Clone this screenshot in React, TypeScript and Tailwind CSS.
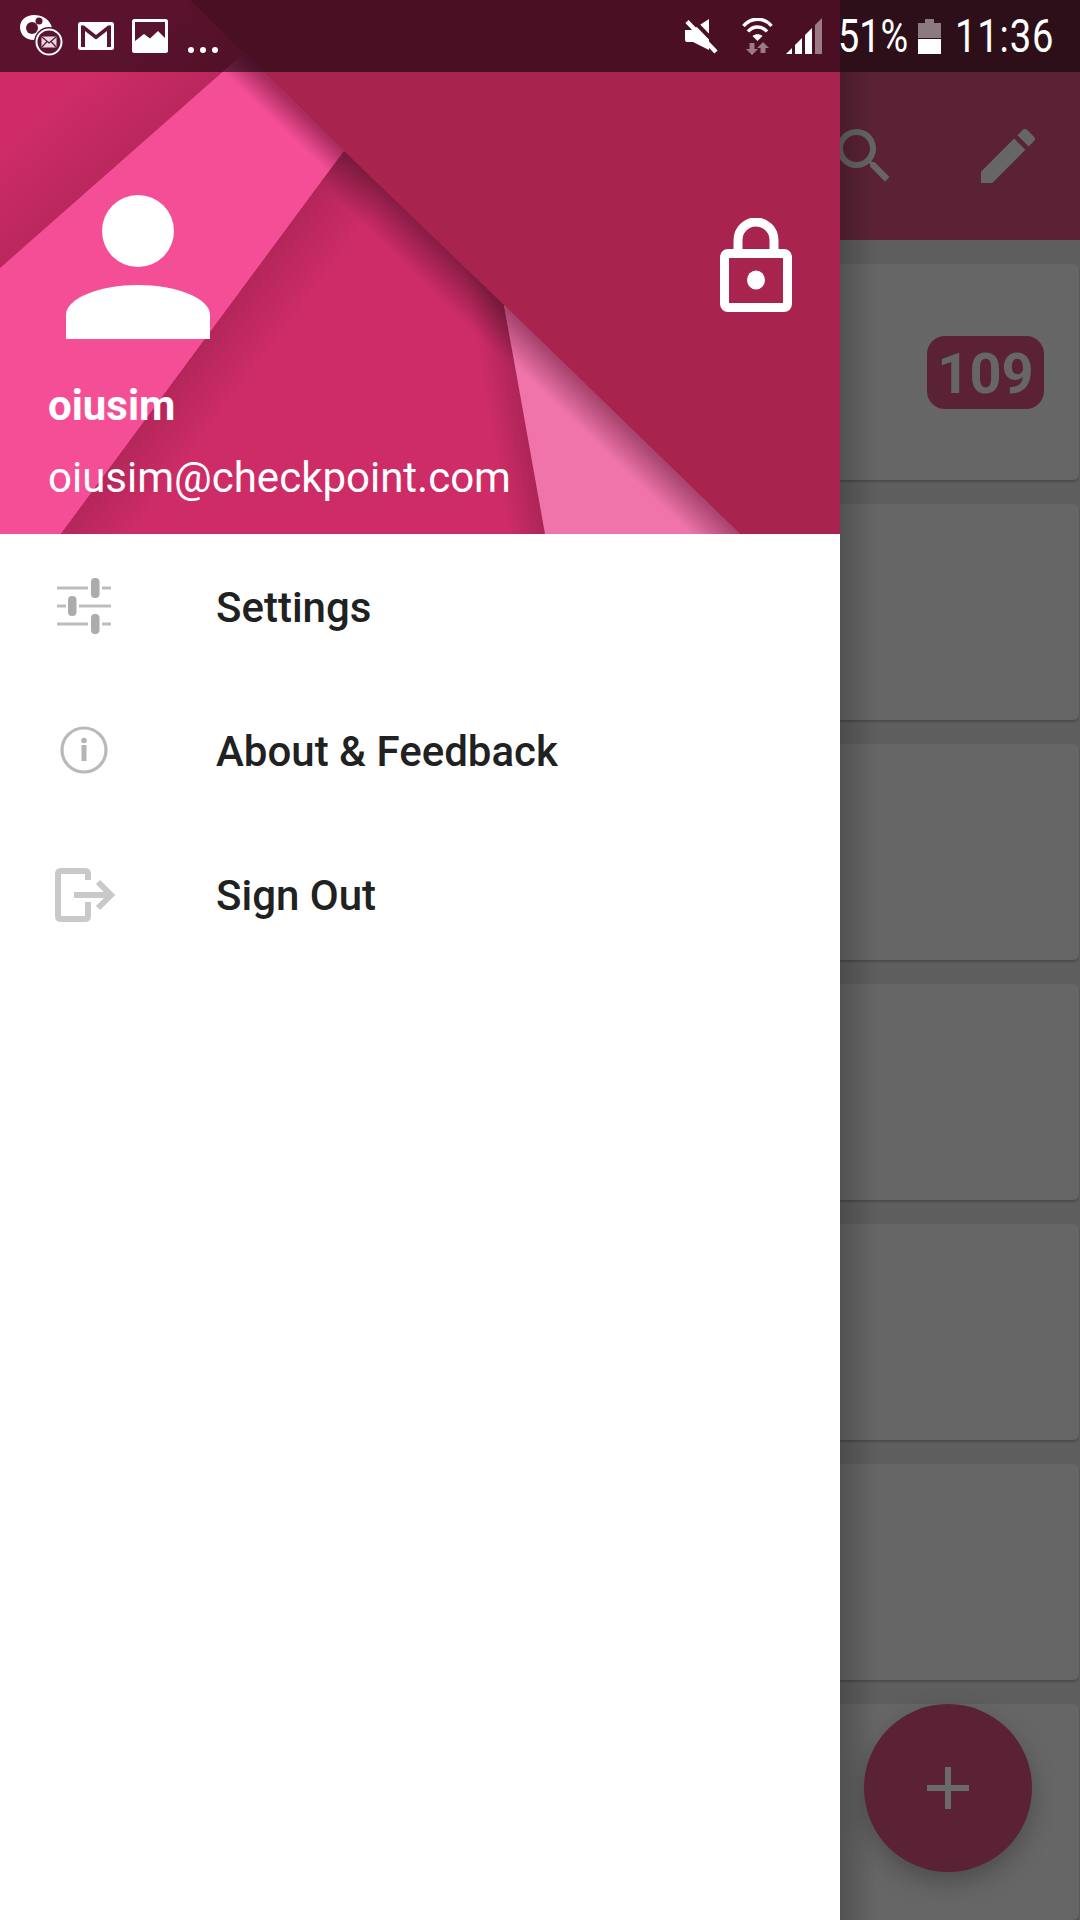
const FONT = "font-['Roboto',sans-serif]";

function HeaderArt() {
  return (
    <svg className="absolute inset-0" width="840" height="534" viewBox="0 0 840 534">
      <defs>
        <linearGradient id="topLeft" gradientUnits="userSpaceOnUse" x1="122" y1="160" x2="62" y2="92">
          <stop offset="0" stopColor="#000" stopOpacity="0.1" />
          <stop offset="1" stopColor="#000" stopOpacity="0" />
        </linearGradient>
        <linearGradient id="bandTop" gradientUnits="userSpaceOnUse" x1="344" y1="151" x2="326" y2="170">
          <stop offset="0" stopColor="#6a0f30" stopOpacity="0.55" />
          <stop offset="1" stopColor="#6a0f30" stopOpacity="0" />
        </linearGradient>
        <linearGradient id="midTop" gradientUnits="userSpaceOnUse" x1="424" y1="228" x2="396" y2="257">
          <stop offset="0" stopColor="#000" stopOpacity="0.35" />
          <stop offset="1" stopColor="#000" stopOpacity="0" />
        </linearGradient>
        <linearGradient id="midLeft" gradientUnits="userSpaceOnUse" x1="200" y1="346" x2="248" y2="382">
          <stop offset="0" stopColor="#000" stopOpacity="0.13" />
          <stop offset="1" stopColor="#000" stopOpacity="0" />
        </linearGradient>
        <linearGradient id="midRight" gradientUnits="userSpaceOnUse" x1="525" y1="420" x2="490" y2="426">
          <stop offset="0" stopColor="#000" stopOpacity="0.16" />
          <stop offset="1" stopColor="#000" stopOpacity="0" />
        </linearGradient>
        <linearGradient id="lightTop" gradientUnits="userSpaceOnUse" x1="622" y1="419" x2="598" y2="444">
          <stop offset="0" stopColor="#5a0f2c" stopOpacity="0.5" />
          <stop offset="1" stopColor="#5a0f2c" stopOpacity="0" />
        </linearGradient>
      </defs>
      <rect width="840" height="534" fill="#a8234e" />
      <polygon points="0,0 190,0 244,53 0,268" fill="#cf2c67" />
      <polygon points="0,0 190,0 244,53 0,268" fill="url(#topLeft)" />
      <polygon points="0,268 244,53 344,151 61,534 0,534" fill="#f44f96" />
      <polygon points="0,268 244,53 344,151 61,534 0,534" fill="url(#bandTop)" />
      <polygon points="344,151 504,305 545,534 61,534" fill="#ce2c67" />
      <polygon points="344,151 504,305 545,534 61,534" fill="url(#midLeft)" />
      <polygon points="344,151 504,305 545,534 61,534" fill="url(#midTop)" />
      <polygon points="344,151 504,305 545,534 61,534" fill="url(#midRight)" />
      <polygon points="504,305 740,534 545,534" fill="#ee74aa" />
      <polygon points="504,305 740,534 545,534" fill="url(#lightTop)" />
    </svg>
  );
}

function Avatar() {
  return (
    <svg width="144" height="144" viewBox="0 0 144 144" className="ml-[18px]">
      <circle cx="72" cy="36" r="36" fill="#fff" />
      <path d="M0 144V120C0 103 34 90 72 90S144 103 144 120V144Z" fill="#fff" />
    </svg>
  );
}

function Lock() {
  return (
    <svg width="72" height="94" viewBox="0 0 72 94" className="mt-[23px]">
      <path d="M18 36V22a18 18 0 0 1 36 0V36" fill="none" stroke="#fff" strokeWidth="9" />
      <path
        d="M8 31H64A8 8 0 0 1 72 39V86A8 8 0 0 1 64 94H8A8 8 0 0 1 0 86V39A8 8 0 0 1 8 31ZM9 40V85H63V40Z"
        fill="#fff"
        fillRule="evenodd"
      />
      <ellipse cx="36" cy="62" rx="9" ry="9.500" fill="#fff" />
    </svg>
  );
}

function SlidersIcon() {
  return (
    <svg width="72" height="72" viewBox="0 0 72 72">
      <g fill="#bdbdbd">
        <rect x="9" y="16.500" width="31" height="3" />
        <rect x="54" y="16.500" width="9" height="3" />
        <rect x="9" y="34.500" width="9" height="3" />
        <rect x="31" y="34.500" width="32" height="3" />
        <rect x="9" y="52.500" width="31" height="3" />
        <rect x="54" y="52.500" width="9" height="3" />
      </g>
      <g fill="#acacac">
        <rect x="43" y="8" width="8.500" height="20" rx="4" />
        <rect x="20" y="26" width="8.500" height="20" rx="4" />
        <rect x="43" y="44" width="8.500" height="20" rx="4" />
      </g>
    </svg>
  );
}

function InfoIcon() {
  return (
    <svg width="72" height="72" viewBox="0 0 72 72">
      <circle cx="36" cy="36" r="22" fill="none" stroke="#b9b9b9" strokeWidth="3.200" />
      <circle cx="36" cy="26.500" r="2.800" fill="#b5b5b5" />
      <rect x="33.500" y="31" width="5" height="16" fill="#b5b5b5" />
    </svg>
  );
}

function SignOutIcon() {
  return (
    <svg width="72" height="72" viewBox="0 0 72 72">
      <path
        d="M40 22V16Q40 13 37 13H13Q10 13 10 16V58Q10 61 13 61H37Q40 61 40 58V44"
        fill="none"
        stroke="#c9c9c9"
        strokeWidth="6"
      />
      <path d="M26 37H62" fill="none" stroke="#c9c9c9" strokeWidth="6" />
      <path d="M50 24L63 37L50 50" fill="none" stroke="#c9c9c9" strokeWidth="6" />
    </svg>
  );
}

const menu = [
  { label: "Settings", icon: <SlidersIcon /> },
  { label: "About & Feedback", icon: <InfoIcon /> },
  { label: "Sign Out", icon: <SignOutIcon /> },
];

function NotifyApp() {
  return (
    <svg width="44" height="44" viewBox="0 0 44 44">
      <path d="M14 1C22 1 30 5 32 14L14 26C5 26 0 20 0 13C0 6 6 1 14 1Z" fill="#fff" />
      <circle cx="12" cy="14" r="6" fill="#5a1430" />
      <circle cx="19" cy="7" r="3.500" fill="#5a1430" />
      <circle cx="29" cy="28" r="15" fill="#5a1430" />
      <circle cx="29" cy="28" r="12.500" fill="none" stroke="#fff" strokeWidth="2" />
      <rect x="21.500" y="22.500" width="15" height="11" rx="1" fill="#e8d8de" />
      <path d="M22 23L29 29L36 23M22 33L27 27.500M36 33L31 27.500" fill="none" stroke="#5a1430" strokeWidth="1.200" />
    </svg>
  );
}

function NotifyMail() {
  return (
    <svg width="36" height="28" viewBox="0 0 36 28">
      <rect width="36" height="28" rx="2.500" fill="#fff" />
      <path d="M3 3.500V25H7V9L18 17.500L29 9V25H33V3.500H30L18 13L6 3.500Z" fill="#5a1430" />
    </svg>
  );
}

function NotifyImage() {
  return (
    <svg width="36" height="34" viewBox="0 0 36 34">
      <rect width="36" height="34" rx="2.500" fill="#fff" />
      <path d="M3 3H33V19L26 12L18 19.500L12 15L3 22Z" fill="#5a1430" />
    </svg>
  );
}

function MuteIcon() {
  return (
    <svg width="33" height="35" viewBox="0 0 33 35">
      <path d="M0 11H7L24 0V31L8 23H2Q0 23 0 21Z" fill="#fff" />
      <path d="M6 -1L35 29" stroke="#4a1025" strokeWidth="4" />
      <path d="M2 2.500L31 33" stroke="#fff" strokeWidth="4.500" />
    </svg>
  );
}

function WifiIcon() {
  return (
    <svg width="31" height="37" viewBox="0 0 31 37">
      <g fill="none" stroke="#fff" strokeWidth="3.500">
        <path d="M1.500 8C9 -1 22 -1 29.500 8" />
        <path d="M6 13.500C11 7.500 20 7.500 25 13.500" />
      </g>
      <path d="M10.500 18C13 15.500 18 15.500 20.500 18L15.500 23Z" fill="#fff" />
      <g fill="#fff" fillOpacity="0.45">
        <path d="M7.500 25H12.500V31H16L10 37L4 31H7.500Z" />
        <path d="M21 24L27 30H23.500V35H18.500V30H15Z" />
      </g>
    </svg>
  );
}

function SignalIcon() {
  return (
    <svg width="36" height="36" viewBox="0 0 36 36">
      <path d="M0 36L6 30V36Z" fill="#fff" />
      <path d="M9 27L16 20V36H9Z" fill="#fff" />
      <path d="M19 17L26 10V36H19Z" fill="#fff" />
      <path d="M29 7L36 0V36H29Z" fill="#fff" fillOpacity="0.45" />
    </svg>
  );
}

function StatusBar() {
  return (
    <div className={`absolute top-0 left-0 flex h-[72px] w-[1080px] text-white ${FONT}`}>
      <div className="flex h-full w-[840px] items-center bg-black/[.56] pr-[18px] pl-[20px]">
        <NotifyApp />
        <div className="ml-[14px]">
          <NotifyMail />
        </div>
        <div className="ml-[18px]">
          <NotifyImage />
        </div>
        <div className="mt-[28px] ml-[20px] flex gap-[6px]">
          <span className="h-[6px] w-[6px] rounded-full bg-white" />
          <span className="h-[6px] w-[6px] rounded-full bg-white" />
          <span className="h-[6px] w-[6px] rounded-full bg-white" />
        </div>
        <div className="ml-auto flex items-center">
          <MuteIcon />
          <div className="ml-[24px]">
            <WifiIcon />
          </div>
          <div className="ml-[13px]">
            <SignalIcon />
          </div>
        </div>
      </div>
      <div className="flex h-full flex-1 items-center bg-[#2c0f18]">
        <span className="-ml-[2px] w-[70px] origin-left scale-x-[0.82] text-[46px] leading-none whitespace-nowrap">
          51%
        </span>
        <div className="ml-[10px] flex h-[35px] w-[23px] flex-col items-center">
          <div className="h-[4px] w-[9px] bg-white/45" />
          <div className="h-[15px] w-full bg-white/45" />
          <div className="mt-[1px] h-[15px] w-full bg-white" />
        </div>
        <span className="ml-[14px] w-[93px] origin-left scale-x-[0.83] text-[46px] leading-none tracking-[1px] whitespace-nowrap">
          11:36
        </span>
      </div>
    </div>
  );
}

function Drawer() {
  return (
    <div className="z-10 flex h-full w-[840px] flex-col bg-white">
      <div className="relative h-[534px] overflow-hidden">
        <HeaderArt />
        <div className={`relative flex flex-col px-[48px] pt-[195px] text-white ${FONT}`}>
          <div className="flex items-start justify-between">
            <Avatar />
            <Lock />
          </div>
          <div className="mt-[39px] text-[42px] leading-[56px] font-bold">oiusim</div>
          <div className="mt-[16px] text-[42px] leading-[56px]">oiusim@checkpoint.com</div>
        </div>
      </div>
      <div className={`flex flex-col ${FONT}`}>
        {menu.map((item) => (
          <div key={item.label} className="flex h-[144px] items-center pl-[48px]">
            {item.icon}
            <span className="mt-[3px] ml-[96px] text-[42px] font-medium text-[#212121]">{item.label}</span>
          </div>
        ))}
      </div>
    </div>
  );
}

function Background() {
  const cards = [0, 1, 2, 3, 4, 5, 6];
  return (
    <div className={`relative flex h-full flex-1 flex-col overflow-hidden bg-[#5e5e5e] pt-[72px] ${FONT}`}>
      <div className="flex h-[168px] shrink-0 items-center bg-[#5b2236] pr-[36px] pl-0">
        <svg width="72" height="72" viewBox="0 0 24 24" fill="#666" className="-ml-[12px]">
          <path d="M15.5 14h-.79l-.28-.27C15.41 12.59 16 11.11 16 9.5 16 5.91 13.09 3 9.5 3S3 5.91 3 9.5 5.91 16 9.5 16c1.61 0 3.09-.59 4.23-1.57l.27.28v.79l5 4.99L20.49 19l-4.99-5zm-6 0C7.01 14 5 11.99 5 9.5S7.01 5 9.5 5 14 7.01 14 9.5 11.99 14 9.5 14z" />
        </svg>
        <svg width="72" height="72" viewBox="0 0 24 24" fill="#666" className="ml-auto">
          <path d="M3 17.25V21h3.75L17.81 9.94l-3.75-3.75L3 17.25zM20.71 7.04c.39-.39.39-1.02 0-1.41l-2.34-2.34c-.39-.39-1.02-.39-1.41 0l-1.83 1.83 3.75 3.75 1.83-1.83z" />
        </svg>
      </div>
      <div className="flex flex-col gap-[24px] pt-[24px] pr-[1px]">
        {cards.map((card) => (
          <div
            key={card}
            className="flex h-[216px] shrink-0 items-center justify-end rounded-r-[6px] bg-[#666666] pr-[35px] shadow-[0_2px_2px_rgba(0,0,0,0.2)]"
          >
            {card === 0 && (
              <div className="flex h-[73px] w-[117px] items-center justify-center rounded-[18px] bg-[#5b2236] pt-[3px] text-[56px] font-bold text-[#666666]">
                109
              </div>
            )}
          </div>
        ))}
      </div>
      <div className="absolute top-0 bottom-0 left-0 w-[36px] bg-gradient-to-r from-black/20 to-transparent" />
      <div className="absolute right-[48px] bottom-[48px] flex h-[168px] w-[168px] items-center justify-center rounded-full bg-[#5b2236] shadow-[0_10px_24px_rgba(0,0,0,0.25)]">
        <svg width="42" height="42" viewBox="0 0 42 42">
          <path d="M18 0H24V18H42V24H24V42H18V24H0V18H18Z" fill="#6a6a6a" />
        </svg>
      </div>
    </div>
  );
}

export default function App() {
  return (
    <div className="relative flex h-[1920px] w-[1080px] overflow-hidden">
      <Drawer />
      <Background />
      <div className="absolute inset-0 z-20">
        <StatusBar />
      </div>
    </div>
  );
}
